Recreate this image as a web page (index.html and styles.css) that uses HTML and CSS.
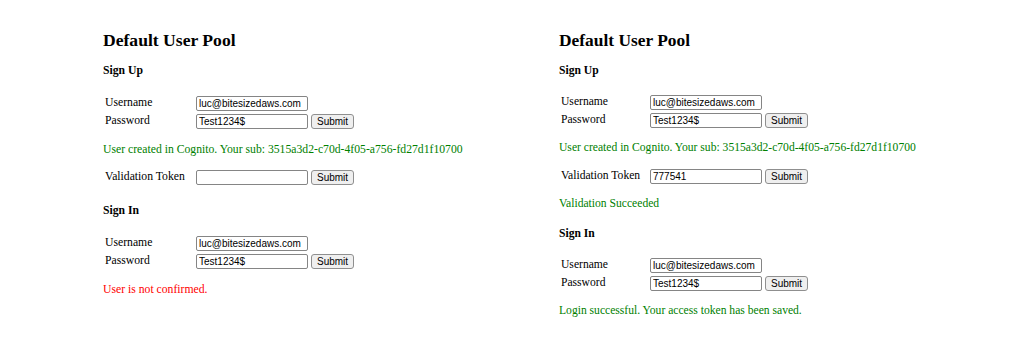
FILE: index.html
```html
<!DOCTYPE html>
<html lang="en">
<head>
  <meta charset="UTF-8">
  <title>Default User Pool</title>
  <link rel="stylesheet" href="styles.css">
</head>
<body>
  <main class="page">

    <section class="pool">
      <h2 class="pool-title">Default User Pool</h2>

      <h4 class="section-title">Sign Up</h4>
      <table class="form-table">
        <tr>
          <td class="label">Username</td>
          <td><div class="field-row"><input class="field" type="text" value="luc@bitesizedaws.com"></div></td>
        </tr>
        <tr>
          <td class="label">Password</td>
          <td><div class="field-row"><input class="field" type="text" value="Test1234$"><button class="submit">Submit</button></div></td>
        </tr>
      </table>
      <p class="msg msg-ok">User created in Cognito. Your sub: 3515a3d2-c70d-4f05-a756-fd27d1f10700</p>

      <table class="form-table">
        <tr>
          <td class="label">Validation Token</td>
          <td><div class="field-row"><input class="field" type="text" value=""><button class="submit">Submit</button></div></td>
        </tr>
      </table>

      <h4 class="section-title">Sign In</h4>
      <table class="form-table">
        <tr>
          <td class="label">Username</td>
          <td><div class="field-row"><input class="field" type="text" value="luc@bitesizedaws.com"></div></td>
        </tr>
        <tr>
          <td class="label">Password</td>
          <td><div class="field-row"><input class="field" type="text" value="Test1234$"><button class="submit">Submit</button></div></td>
        </tr>
      </table>
      <p class="msg msg-error">User is not confirmed.</p>
    </section>

    <section class="pool pool-result">
      <h2 class="pool-title">Default User Pool</h2>

      <h4 class="section-title">Sign Up</h4>
      <table class="form-table">
        <tr>
          <td class="label">Username</td>
          <td><div class="field-row"><input class="field" type="text" value="luc@bitesizedaws.com"></div></td>
        </tr>
        <tr>
          <td class="label">Password</td>
          <td><div class="field-row"><input class="field" type="text" value="Test1234$"><button class="submit">Submit</button></div></td>
        </tr>
      </table>
      <p class="msg msg-ok">User created in Cognito. Your sub: 3515a3d2-c70d-4f05-a756-fd27d1f10700</p>

      <table class="form-table">
        <tr>
          <td class="label">Validation Token</td>
          <td><div class="field-row"><input class="field" type="text" value="777541"><button class="submit">Submit</button></div></td>
        </tr>
      </table>
      <p class="msg msg-ok">Validation Succeeded</p>

      <h4 class="section-title">Sign In</h4>
      <table class="form-table">
        <tr>
          <td class="label">Username</td>
          <td><div class="field-row"><input class="field" type="text" value="luc@bitesizedaws.com"></div></td>
        </tr>
        <tr>
          <td class="label">Password</td>
          <td><div class="field-row"><input class="field" type="text" value="Test1234$"><button class="submit">Submit</button></div></td>
        </tr>
      </table>
      <p class="msg msg-ok">Login successful. Your access token has been saved.</p>
    </section>

  </main>
</body>
</html>
```

FILE: styles.css
```css
body {
  margin: 0;
  background: #fff;
  color: #000;
  font-family: "Liberation Serif", "Times New Roman", serif;
}

.page {
  display: flex;
  align-items: flex-start;
  padding: 30px 0 0 103px;
}

.pool {
  width: 456px;
  display: flex;
  flex-direction: column;
  align-items: flex-start;
}

.pool-title {
  font-size: 17.6px;
  line-height: 20px;
  font-weight: bold;
  margin: 0 0 14px;
}

.section-title {
  font-size: 11.7px;
  line-height: 14px;
  font-weight: bold;
  margin: 17px 0 0;
}
.pool-title + .section-title {
  margin-top: 0;
}

.form-table {
  border-spacing: 2px;
  border-collapse: separate;
  margin: 14px 0 0;
}
.section-title + .form-table {
  margin-top: 15px;
}
.msg + .form-table {
  margin-top: 10px;
}

.form-table td {
  height: 16px;
  padding: 0;
  font-size: 11.7px;
  line-height: 14px;
  vertical-align: middle;
}
.form-table td.label {
  width: 89px;
}

.field-row {
  display: flex;
  align-items: center;
  gap: 3px;
}

.field {
  box-sizing: border-box;
  width: 112px;
  height: 15px;
  margin: 0;
  padding: 0 2px;
  border: 1px solid #858585;
  border-radius: 2px;
  background: #fff;
  color: #000;
  font-family: "Liberation Sans", Arial, sans-serif;
  font-size: 10px;
}

.submit {
  box-sizing: border-box;
  height: 15px;
  margin: 0;
  padding: 0 5px;
  border: 1px solid #8f8f8f;
  border-radius: 3px;
  background: #efefef;
  color: #000;
  font-family: "Liberation Sans", Arial, sans-serif;
  font-size: 10px;
  line-height: 11px;
}

.msg {
  font-size: 11.7px;
  line-height: 14px;
  margin: 12px 0 0;
}
.msg-ok {
  color: #008000;
}
.msg-error {
  color: #ff0000;
}

/* the second shot was captured slightly tighter */
.pool-result .pool-title {
  font-size: 17.4px;
}
.pool-result .section-title,
.pool-result .form-table td,
.pool-result .msg {
  font-size: 11.6px;
}
.pool-result .section-title + .form-table {
  margin-top: 14px;
}
.pool-result .msg {
  margin-top: 11px;
}
.pool-result .msg + .form-table {
  margin-top: 11px;
}
.pool-result .msg + .section-title {
  margin-top: 16px;
}
.pool-result .form-table td.label {
  width: 87px;
}
```
